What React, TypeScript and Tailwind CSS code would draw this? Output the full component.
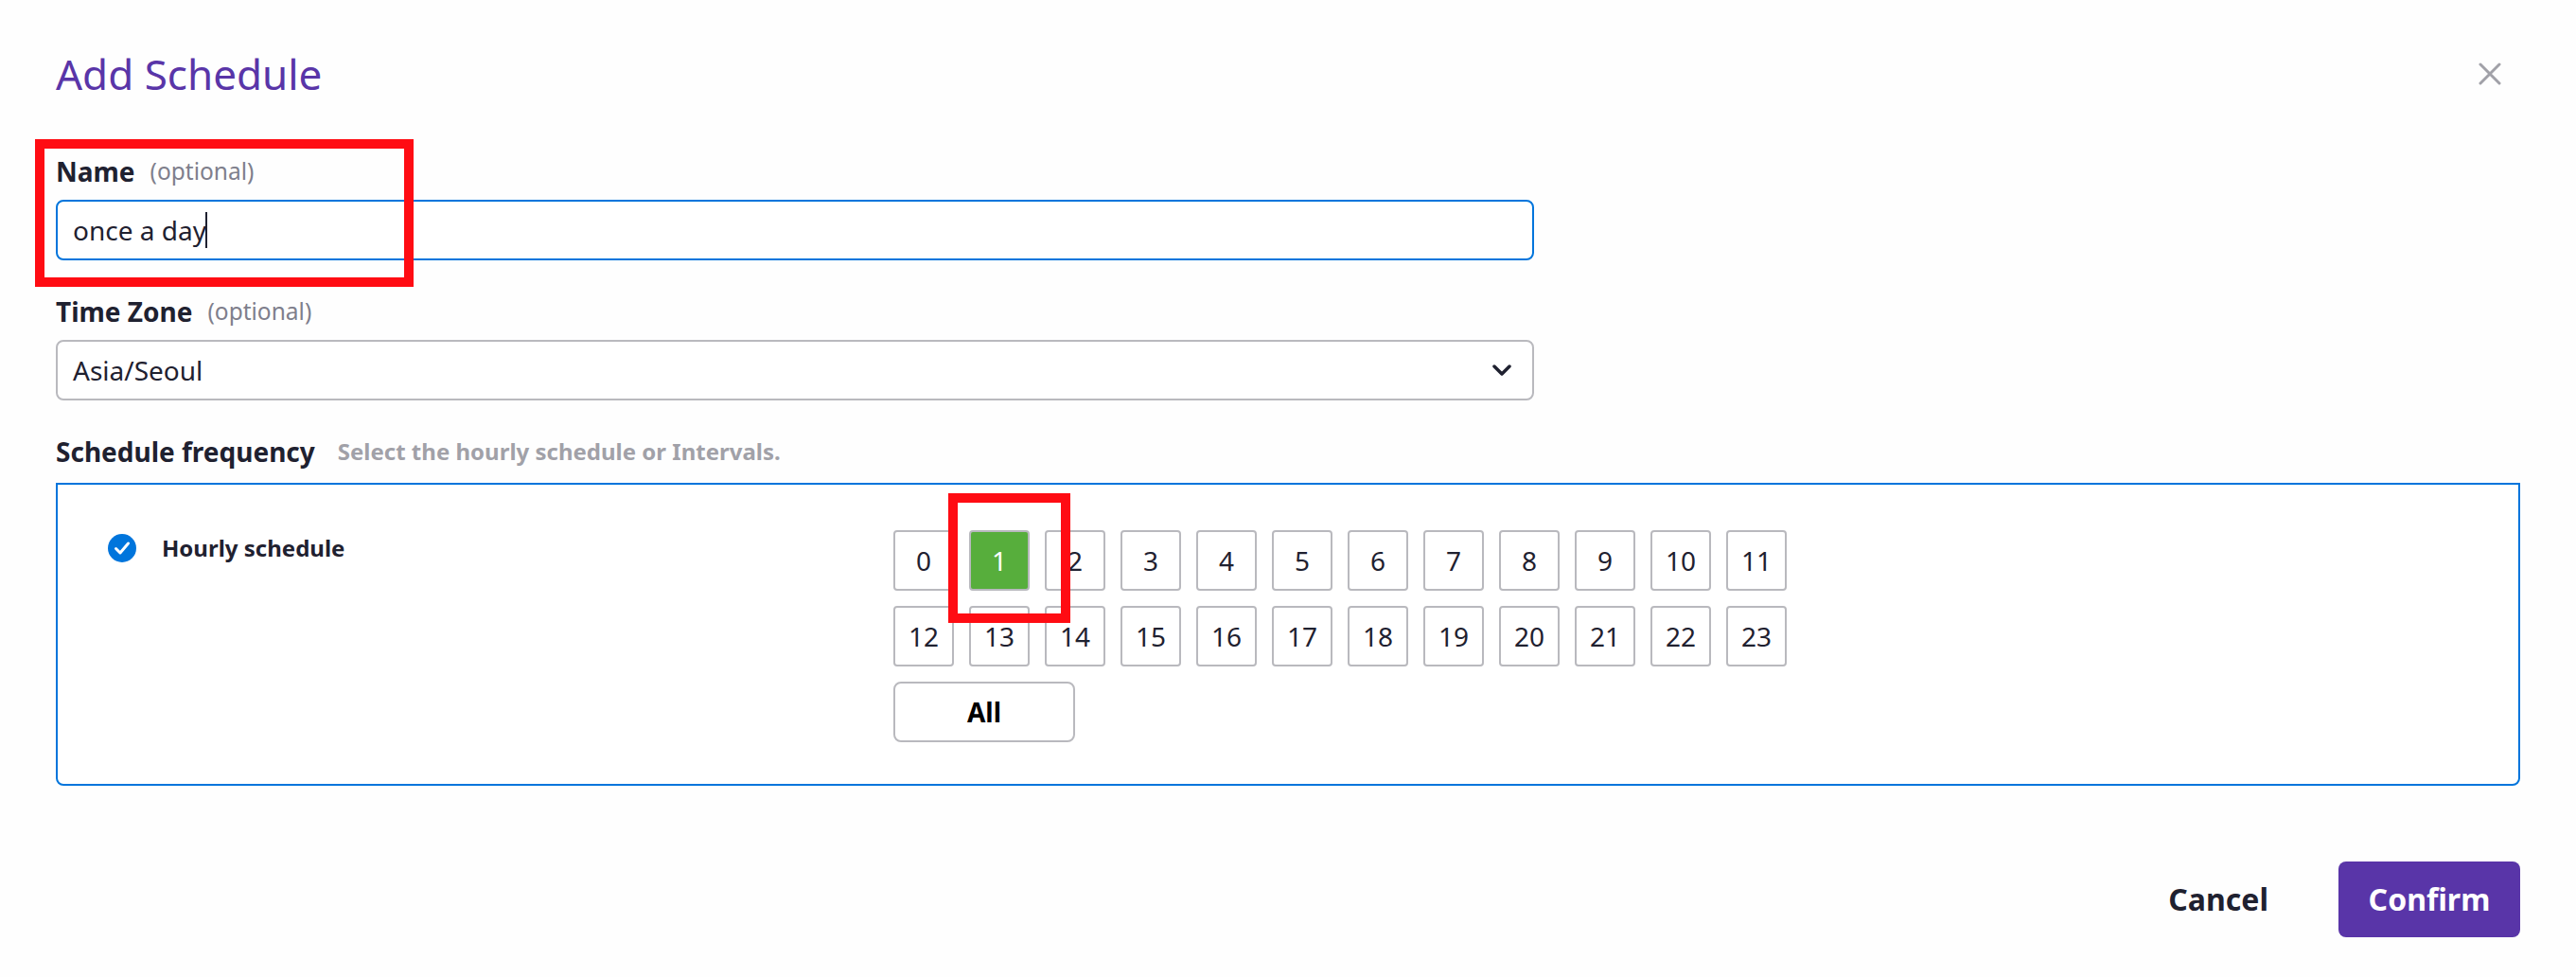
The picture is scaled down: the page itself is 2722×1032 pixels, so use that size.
import React from "react";

const row1 = [0, 1, 2, 3, 4, 5, 6, 7, 8, 9, 10, 11];
const row2 = [12, 13, 14, 15, 16, 17, 18, 19, 20, 21, 22, 23];

function Hour({ n }: { n: number }) {
  const on = n === 1;
  return (
    <div
      className={
        "flex h-16 w-16 items-center justify-center rounded-[4px] border-2 border-[#b9b9be] text-[28px] leading-none " +
        (on ? "bg-[#57ae3c] text-white" : "bg-white text-[#1f2130]")
      }
    >
      {n}
    </div>
  );
}

export default function App() {
  return (
    <div
      className="relative h-[1032px] w-[2722px] overflow-hidden bg-[#fefefe] text-[#1f2130]"
      style={{ fontFamily: '"Noto Sans", sans-serif' }}
    >
      <div className="flex flex-col px-[59px] pt-[49px]">
        <div className="flex h-[58px] items-center justify-between">
          <h1 className="text-[44px] leading-[58px] font-normal text-[#5935a8]">Add Schedule</h1>
          <svg width="24" height="24" viewBox="0 0 24 24" className="mr-[20px]" fill="none" stroke="#a1a1a8" strokeWidth="3" strokeLinecap="round">
            <path d="M2 2 L22 22 M22 2 L2 22" />
          </svg>
        </div>

        <div className="mt-[54px] flex h-[40px] items-center gap-4">
          <span className="text-[28px] font-bold">Name</span>
          <span className="text-[24.5px] text-[#7f7f8c]">(optional)</span>
        </div>
        <div className="mt-[10px] flex h-[64px] w-[1562px] items-center rounded-lg border-2 border-[#0075dc] bg-white pl-[16px] text-[28px]">
          once a day
          <span className="ml-[-1px] h-[38px] w-[2px] bg-[#1f2130]"></span>
        </div>

        <div className="mt-[34px] flex h-[40px] items-center gap-4">
          <span className="text-[28px] font-bold">Time Zone</span>
          <span className="text-[24.5px] text-[#7f7f8c]">(optional)</span>
        </div>
        <div className="mt-[10px] flex h-[64px] w-[1562px] items-center justify-between rounded-lg border-2 border-[#b9b9be] bg-white pl-[16px] pr-[22px] text-[28px]">
          Asia/Seoul
          <svg width="20" height="12" viewBox="0 0 20 12" fill="none" stroke="#1f2130" strokeWidth="3.5" strokeLinecap="round" strokeLinejoin="round">
            <path d="M2 2 L10 10 L18 2" />
          </svg>
        </div>

        <div className="mt-[34px] flex h-[40px] items-center gap-6">
          <span className="text-[28px] font-bold">Schedule frequency</span>
          <span className="text-[24px] font-bold text-[#a1a1a8]">Select the hourly schedule or Intervals.</span>
        </div>

        <div className="mt-[13px] flex h-[320px] w-[2604px] items-start rounded-b-lg border-2 border-[#0075dc] bg-white pl-[53px] pt-[48px]">
          <div className="flex w-[830px] items-center gap-[27px] pt-[4px]">
            <svg width="30" height="30" viewBox="0 0 30 30">
              <circle cx="15" cy="15" r="15" fill="#0075dc" />
              <path d="M8.5 15.5 L13 20 L21.5 10" fill="none" stroke="#fff" strokeWidth="3" strokeLinecap="round" strokeLinejoin="round" />
            </svg>
            <span className="text-[24px] font-bold leading-[30px]">Hourly schedule</span>
          </div>
          <div className="flex flex-col gap-4">
            <div className="flex gap-4">
              {row1.map((n) => (
                <Hour key={n} n={n} />
              ))}
            </div>
            <div className="flex gap-4">
              {row2.map((n) => (
                <Hour key={n} n={n} />
              ))}
            </div>
            <div className="flex h-16 w-[192px] items-center justify-center rounded-lg border-2 border-[#b9b9be] bg-white text-[28px] font-bold text-black">
              All
            </div>
          </div>
        </div>

        <div className="mt-[80px] flex w-[2604px] items-center justify-end gap-[74px]">
          <span className="text-[32px] font-bold">Cancel</span>
          <div className="flex h-[80px] w-[192px] items-center justify-center rounded-lg bg-[#5935a8] text-[32px] font-bold text-white">
            Confirm
          </div>
        </div>
      </div>

      <div className="absolute left-[37px] top-[147px] h-[156px] w-[400px] border-[10px] border-[#ff0c13]"></div>
      <div className="absolute left-[1002px] top-[521px] h-[137px] w-[129px] border-[10px] border-[#ff0c13]"></div>
    </div>
  );
}
